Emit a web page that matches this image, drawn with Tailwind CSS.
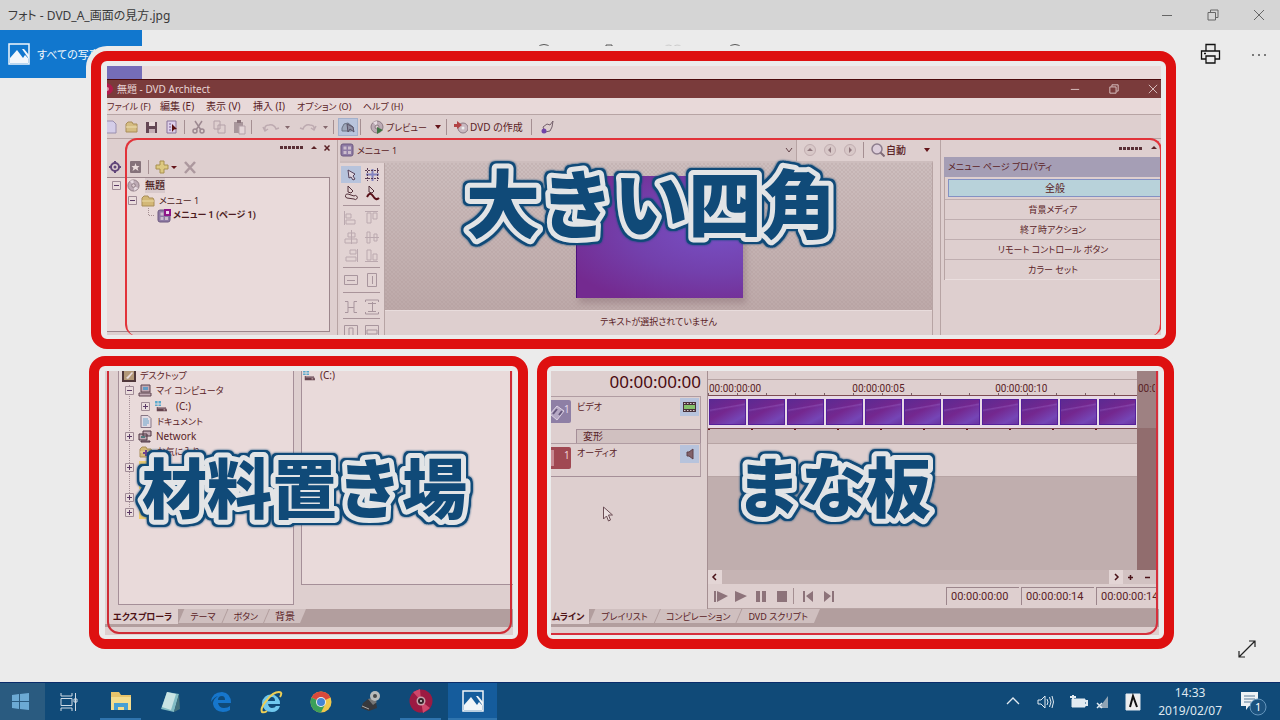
<!DOCTYPE html>
<html lang="ja">
<head>
<meta charset="utf-8">
<title>フォト - DVD_A_画面の見方.jpg</title>
<script src="https://cdn.jsdelivr.net/npm/@tailwindcss/browser@4"></script>
<style>
.caption{fill:#104a78;font-weight:900;stroke:#e2e4e6;stroke-width:10px;stroke-linejoin:round;paint-order:stroke fill;filter:drop-shadow(2px 0 0 #104a78) drop-shadow(-2px 0 0 #104a78) drop-shadow(0 2px 0 #104a78) drop-shadow(0 -2px 0 #104a78) drop-shadow(0 0 1px #104a78)}
.dither{background-image:repeating-conic-gradient(#a8909033 0 25%,transparent 0 50%),linear-gradient(#cdbebe,#bda9a9);background-size:4px 4px,100% 100%}
.film{background:linear-gradient(170deg,transparent 30%,#a070d055 34%,transparent 40%),linear-gradient(150deg,#5c2a92,#74278f 45%,#7546b6 80%,#6a35a2)}
.slide{background:radial-gradient(ellipse at 85% 45%,#7850c4,#7340ac 45%,#742a90 85%)}
</style>
</head>
<body class="h-screen min-h-[720px] flex flex-col bg-[#ebebeb] overflow-hidden text-[#5a2226] text-[9px] leading-[15px] font-['Noto_Sans','Noto_Sans_CJK_JP',sans-serif] [font-feature-settings:'palt']">
<svg class="hidden">
  <symbol id="plus" viewBox="0 0 9 9"><path d="M.5.5h8v8h-8z" fill="#eadcdc" stroke="#a08b96"/><path d="M2 4.500h5M4.500 2v5" stroke="#5c3b66"/></symbol>
  <symbol id="minus" viewBox="0 0 9 9"><path d="M.5.5h8v8h-8z" fill="#eadcdc" stroke="#a08b96"/><path d="M2 4.500h5" stroke="#5c3b66"/></symbol>
  <symbol id="folder" viewBox="0 0 14 13"><path d="M1 11V4l2-2h4l1 2h4l1 2v6H1z" fill="#d3b877" stroke="#a98d58"/><path d="M1 7h12" stroke="#ecdca8"/></symbol>
  <symbol id="disc" viewBox="0 0 14 14"><circle cx="7" cy="7" r="6" fill="#bcaab4" stroke="#8b7982"/><path d="M7 7L3 2l4-1zM7 7l5 3-4 3z" fill="#e6dae0"/><circle cx="7" cy="7" r="2" fill="#dccbd0" stroke="#8b7982"/></symbol>
  <symbol id="page" viewBox="0 0 14 14"><rect x="1" y="1" width="12" height="12" rx="2" fill="#8e7ba4" stroke="#6d5980"/><path d="M3.500 3.500h3v3h-3zM8 3.500h3v3H8zM3.500 8h3v3h-3zM8 8h3v3H8z" fill="#cbbccc"/></symbol>
  <symbol id="drive" viewBox="0 0 14 13"><path d="M0 0h3v3H0zM4 0h3v3H4zM0 4h3v2H0zM4 4h3v2H4z" fill="#58a8cc"/><path d="M2 7h10l2 3v2H2z" fill="#65434e"/><path d="M3 7h9l1 2H3z" fill="#a38b93"/><path d="M10 10h2v1h-2z" fill="#e5cccc"/></symbol>
  <symbol id="grip" viewBox="0 0 25 3"><path d="M1 1.500h24" stroke="#5a3036" stroke-width="3" stroke-dasharray="3 1"/></symbol>
  <symbol id="win" viewBox="0 0 12 12"><path d="M3.500 3V1h7.500v7.500H9M1 3.500h7.500V11H1z" fill="none" stroke="currentColor"/></symbol>
  <symbol id="x" viewBox="0 0 12 12"><path d="M1 1l10 10M11 1L1 11" stroke="currentColor"/></symbol>
  <symbol id="mag" viewBox="0 0 14 14"><circle cx="6" cy="6" r="5" fill="#dccdda" stroke="#8d7d8d" stroke-width="1.500"/><path d="M9.500 9.500l4 4" stroke="#806c78" stroke-width="2"/></symbol>
  <symbol id="picture" viewBox="0 0 22 22"><path d="M1 1h20v20H1z" fill="none" stroke="currentColor" stroke-width="1.500"/><path d="M2 20v-5l7-8 6 8 2-3 3 3v5z" fill="currentColor"/><path d="M14 6l7 10v-4l-5-6z" fill="currentColor"/></symbol>
</svg>

<header class="h-[30px] shrink-0 flex items-center justify-between bg-[#d5d5d5] pl-2 pr-[15px] text-[#3a3a3a]">
  <h1 class="text-[12px]">フォト - DVD_A_画面の見方.jpg</h1>
  <div class="flex items-center gap-[34px] text-[#666]">
    <button aria-label="最小化" class="w-3"><svg class="w-3 h-3" viewBox="0 0 12 12"><path d="M1 6.500h10" stroke="currentColor"/></svg></button>
    <button aria-label="元に戻す" class="w-3"><svg class="w-3 h-3"><use href="#win"/></svg></button>
    <button aria-label="閉じる" class="w-3"><svg class="w-3 h-3"><use href="#x"/></svg></button>
  </div>
</header>

<main class="relative grow">
  <div class="h-12 flex items-center pr-[13px]">
    <button class="h-12 w-[142px] shrink-0 bg-[#1177ce] text-[#f2f7fc] flex items-center gap-[7px] pl-2 text-[11px]"><svg class="w-[22px] h-[22px] shrink-0"><use href="#picture"/></svg>すべての写真</button>
    <div class="flex gap-[42px] ml-[392px] text-[#555]" aria-hidden="true">
      <svg class="w-[22px] h-[22px]" viewBox="0 0 22 22"><circle cx="10" cy="10" r="8.500" fill="none" stroke="currentColor"/></svg>
      <svg class="w-[22px] h-[22px]" viewBox="0 0 22 22"><path d="M3 4h16M8 4V2h6v2M5 4v16h12V4" fill="none" stroke="currentColor"/></svg>
      <svg class="w-[22px] h-[22px] text-[#ccc]" viewBox="0 0 22 22"><path d="M11 20L2 9Q1 2 7 2q3 0 4 3 1-3 4-3 6 0 5 7z" fill="none" stroke="currentColor"/></svg>
      <svg class="w-[22px] h-[22px]" viewBox="0 0 22 22"><circle cx="9" cy="10" r="8.500" fill="none" stroke="currentColor"/></svg>
    </div>
    <div class="flex items-center gap-[29px] ml-auto text-[#111]">
      <button aria-label="印刷"><svg class="w-[22px] h-[22px] block" viewBox="0 0 22 22" fill="none" stroke="currentColor" stroke-width="1.300"><path d="M6 8V1.500h9V8M6 16H1.500V8h18v8H15M6 13h9v7H6zM4 10.500h2"/></svg></button>
      <button aria-label="その他"><svg class="w-4 h-4 block" viewBox="0 0 16 16" fill="#555"><circle cx="2" cy="9" r="1"/><circle cx="8" cy="9" r="1"/><circle cx="14" cy="9" r="1"/></svg></button>
    </div>
  </div>

  <div class="relative -mt-[27px] ml-[91px] mr-[104px]">
    <!-- upper region: menu editor -->
    <section class="border-[10px] border-[#de1010] rounded-[16px] shadow-[0_0_0_5px_#ebebeb] bg-[#ebebeb] pt-[5px] pl-[6px] pr-[5px] pb-1">
      <div class="relative h-[269px] flex flex-col overflow-hidden bg-[#decfcf]">
        <div class="h-[13px] shrink-0 bg-[#e9dada]"><div class="w-[35px] h-full bg-[#756db8]"></div></div>
        <div class="h-[19px] shrink-0 bg-[#7a3b3b] border-t border-[#4c0a0c] text-[#e8d6d6] flex items-center justify-between pr-[3px] text-[10px]">
          <div class="flex items-center gap-1"><svg class="w-[6px] h-3" viewBox="0 0 6 12"><path d="M0 0q6 2 6 6t-6 6z" fill="#b01c4c"/><circle cx="0" cy="6" r="2" fill="#d9a"/></svg>無題 - DVD Architect</div>
          <div class="flex gap-[29px]">
            <button aria-label="最小化"><svg class="w-[10px] h-[10px] block" viewBox="0 0 12 12"><path d="M1 6.500h10" stroke="currentColor"/></svg></button>
            <button aria-label="元に戻す"><svg class="w-[10px] h-[10px] block"><use href="#win"/></svg></button>
            <button aria-label="閉じる"><svg class="w-[10px] h-[10px] block"><use href="#x"/></svg></button>
          </div>
        </div>
        <nav class="h-[17px] shrink-0 bg-[#e8d9d9] border-b border-[#b7a4a4] flex items-center text-[10px] text-left whitespace-nowrap">
          <button class="w-[53px] text-[9px] text-left">ファイル (F)</button><button class="w-[46px] text-left">編集 (E)</button><button class="w-[47px] text-left">表示 (V)</button><button class="w-11 text-left">挿入 (I)</button><button class="w-[66px] text-[9px] text-left">オプション (O)</button><button class="text-[9px]">ヘルプ (H)</button>
        </nav>
        <div class="h-[23px] shrink-0 flex items-center pt-px">
          <svg class="w-[231px] h-[18px] shrink-0" viewBox="0 0 231 18" fill="none">
            <path d="M-4 3H6l3 3v9H-4z" fill="#d4cde8" stroke="#9a8fae"/>
            <path d="M19 14V6l2-2h4l1 2h4v8z" fill="#d5bd82" stroke="#a98d58"/><path d="M19 9h11" stroke="#efe0b4"/>
            <path d="M39 4h11v11H39z" fill="#644754"/><path d="M42 4h6v4h-6z" fill="#e9dada"/><path d="M42 11h6v4h-6z" fill="#c5afb6"/>
            <path d="M60 3h9v12h-9z" fill="#ded0ea" stroke="#877299"/><path d="M62 6h2M62 9h2M62 12h2" stroke="#765c95"/><path d="M65 6l5 5-3 .500L65 14z" fill="#5a1010"/>
            <path d="M77.500 2v14M144.500 2v14M226.500 2v14" stroke="#a58f92"/>
            <g stroke="#9c8890" stroke-width="1.500"><path d="M88 3l6 9M95 3l-6 9"/><circle cx="88" cy="13" r="2"/><circle cx="95" cy="13" r="2"/></g>
            <path d="M107 3h6v8h-6zM111 7h7v8h-7z" fill="#decfcf" stroke="#b4a1a8"/><path d="M127 4h9v11h-9z" fill="#a8969b"/><path d="M130 2h4v3h-4z" fill="#8a747b"/><path d="M132 8h6v8h-6z" fill="#e4d6d8" stroke="#b4a1a8"/>
            <path d="M158 12q-1-5 4-5 5-1 7 4l3-1M156 9l2 4 3-2" stroke="#bdaab0" stroke-width="1.500"/><path d="M178 8h5l-2.500 3zM216 8h5l-2.500 3z" fill="#85686d"/>
            <path d="M207 12q1-5-4-5-5-1-7 4l-3-1M209 8l-2 4-3-2" stroke="#bdaab0" stroke-width="1.500"/>
          </svg>
          <button aria-label="自動プレビュー" class="w-5 h-[18px] bg-[#b9c4dc] border border-[#a3b1cc]"><svg viewBox="0 0 18 16"><path d="M3 9l2-4 4-1 5 4v3l-2 1-9 0z" fill="#9fa8bb" stroke="#6a7284"/><path d="M8 5l1 8 2-3 4 3-1-5z" fill="#8c8da1" stroke="#595166"/></svg></button>
          <span class="w-px h-4 bg-[#a58f92] ml-[2px]"></span>
          <button class="flex items-center gap-[2px] ml-[9px]"><svg class="w-[14px] h-[14px]" viewBox="0 0 14 14"><use href="#disc"/><path d="M7 7l6 3-6 4z" fill="#3e7443"/></svg>プレビュー</button>
          <svg class="w-2 h-2 ml-[7px]" viewBox="0 0 8 8"><path d="M1 2h6L4 6z" fill="#64141a"/></svg>
          <span class="w-px h-4 bg-[#a58f92] ml-1"></span>
          <button class="flex items-center gap-[2px] ml-[7px] text-[10px]"><svg class="w-[14px] h-[14px]" viewBox="0 0 14 14"><circle cx="9" cy="8" r="5" fill="#c9b8c0" stroke="#8f7b85"/><circle cx="9" cy="8" r="1.500" fill="#eee"/><path d="M0 4h3V1l5 4-5 4V7H0z" fill="#b24345"/></svg>DVD の作成</button>
          <span class="w-px h-4 bg-[#a58f92] ml-2"></span>
          <button aria-label="ヘルプ" class="ml-2"><svg class="w-[14px] h-[14px] block" viewBox="0 0 14 14"><path d="M5 12L3 7l4-3 3 1 3-4-1 6-2 4z" fill="#decfcf" stroke="#74606b"/><circle cx="4" cy="11" r="2.500" fill="#7144a8"/></svg></button>
        </div>

        <div class="grow flex min-h-0 border-t border-[#b7a4a4] gap-[7px]">
          <!-- project overview -->
          <aside class="w-[223px] shrink-0 flex flex-col pb-[3px]">
            <div class="h-[17px] flex items-center justify-end gap-[6px]">
              <svg class="w-[25px] h-[3px]"><use href="#grip"/></svg>
              <svg class="w-2 h-2" viewBox="0 0 8 8"><path d="M1 5h6L4 2z" fill="#5a2226"/></svg>
              <button aria-label="パネルを閉じる"><svg class="w-[6px] h-[6px] block" viewBox="0 0 12 12"><path d="M1 1l10 10M11 1L1 11" stroke="#5a2226" stroke-width="3"/></svg></button>
            </div>
            <div class="h-[21px] flex items-center">
              <svg class="w-[92px] h-[18px]" viewBox="0 0 92 18" fill="none"><circle cx="8" cy="9" r="4" stroke="#614579" stroke-width="2"/><circle cx="8" cy="9" r="1.500" fill="#614579"/><path d="M8 3v3M8 12v3M2 9h3M11 9h3" stroke="#614579" stroke-width="2"/><rect x="23" y="3" width="11" height="12" rx="1" fill="#85727a"/><path d="M28.500 5l1 3h3l-2 2 1 3-3-2-3 2 1-3-2-2h3z" fill="#eadcdc"/><path d="M41.500 2v14" stroke="#a58f92"/><path d="M53 3h4v4h4v4h-4v4h-4v-4h-4V7h4z" fill="#ddc981" stroke="#a8904f"/><path d="M64 8h6l-3 3z" fill="#64141a"/><path d="M78 4l10 11M88 4L78 15" stroke="#ac989e" stroke-width="2.500"/></svg>
            </div>
            <ul class="grow border-t border-r border-b border-[#9c868c] bg-[#e9dada] text-[#4c1d22]">
              <li class="flex items-center h-[15px] pl-[5px] gap-[6px] text-[10px]"><svg class="w-[9px] h-[9px]"><use href="#minus"/></svg><svg class="w-[13px] h-[13px]"><use href="#disc"/></svg><span class="bg-[#d8c9cb] font-medium -ml-px">無題</span></li>
              <li class="flex items-center h-[15px] pl-[21px] gap-1"><svg class="w-[9px] h-[9px]"><use href="#minus"/></svg><svg class="w-[14px] h-[13px]"><use href="#folder"/></svg>メニュー 1</li>
              <li class="flex items-center h-[15px] pl-[41px] gap-[2px] font-bold font-['Roboto','Noto_Sans_CJK_JP',sans-serif]"><svg class="w-[7px] h-[15px]" viewBox="0 0 7 15"><path d="M.5 0v7.500H7" fill="none" stroke="#a58f92" stroke-dasharray="1 1"/></svg><svg class="w-[14px] h-[14px]" viewBox="0 0 14 14"><use href="#page"/><path d="M8 1h5v5H8z" fill="#ead8ea" stroke="#8e1688" stroke-width="2"/></svg>メニュー 1 (ページ 1)</li>
            </ul>
          </aside>

          <!-- menu preview -->
          <section class="grow flex flex-col min-w-0 border-l border-[#b7a4a4] pl-[2px]">
            <div class="h-[22px] shrink-0 flex items-center gap-[7px]">
              <div class="relative grow h-full flex items-center bg-[#d4c4c4] border-r border-[#b7a4a4]">
                <svg class="absolute left-0 w-[14px] h-[14px] pointer-events-none"><use href="#page"/></svg>
                <select aria-label="メニュー" class="appearance-none w-full h-full pl-[17px] bg-transparent text-[9px]"><option>メニュー 1</option></select>
                <svg class="absolute right-[3px] w-2 h-2 pointer-events-none" viewBox="0 0 8 8"><path d="M1 2l3 4 3-4" fill="none" stroke="#64444a"/></svg>
              </div>
              <svg class="w-[52px] h-[14px]" viewBox="0 0 52 14"><g fill="#d8c8c8" stroke="#c1adb0"><circle cx="6" cy="7" r="5.500"/><circle cx="26" cy="7" r="5.500"/><circle cx="46" cy="7" r="5.500"/></g><path d="M3 8h6L6 5zM27 4v6l-3-3zM45 4v6l3-3z" fill="#8f777d"/></svg>
              <span class="w-px h-4 bg-[#a58f92]"></span>
              <label class="relative flex items-center"><svg class="absolute left-0 w-[14px] h-[14px]"><use href="#mag"/></svg><select aria-label="ズーム" class="appearance-none bg-transparent w-[62px] pl-[15px] text-[10px] h-5 font-medium"><option>自動</option></select><svg class="absolute right-[2px] w-2 h-2 pointer-events-none" viewBox="0 0 8 8"><path d="M1 2h6L4 6z" fill="#64141a"/></svg></label>
            </div>
            <div class="grow flex min-h-0 border-t-2 border-t-[#cdbdbd] border-r border-r-[#b7a4a4]">
              <svg class="w-[44px] h-[174px] shrink-0 bg-[#e2d3d3]" viewBox="0 0 44 174" fill="none" stroke="#bba9af">
                <path d="M1 3h20v17H1z" fill="#b7c3dc" stroke="none"/><path d="M8 7l7 4-2 2 2 3-2 1-2-3-2 1z" fill="#dfd5df" stroke="#53405a"/>
                <path d="M32.500 6v12M26 11.500h13" stroke="#8284c0" stroke-width="2"/><path d="M27.500 5v13M37.500 5v13M25 7.500h15M25 15.500h15" stroke="#5a3c54" stroke-dasharray="2 1"/>
                <g stroke="#53303a"><path d="M8 23l5 5-2 2-3-1zM29 23l5 5-2 2-3-1z" fill="#e2d3d3"/><path d="M7 35a2 2 0 1 1 1-4l6 2a2 2 0 1 1 0 3z"/><path d="M27 34q3-6 6-1t6 2" stroke="#591018" stroke-width="2"/></g>
                <path d="M3 42.500h37M3 104.500h37M3 129.500h37M3 155.500h37" stroke="#a9949a"/>
                <path d="M4.500 48v14M6 51h5v4H6zM6 57h9v4H6zM25 48.500h13M27 50h4v10h-4zM33 50h4v6h-4z"/>
                <path d="M11.500 67v14M8 70h7v4H8zM5 76h12v4H5zM25 74.500h14M27 69h3v11h-3zM34 71h3v7h-3z"/>
                <path d="M17.500 86v13M10 87h6v4h-6zM6 94h10v4H6zM25 98.500h13M27 87h4v10h-4zM33 91h4v6h-4z"/>
                <g stroke="#a8959d"><path d="M4.500 112.500h13v9h-13zM7 117.500h8M27.500 110.500h9v13h-9zM32.500 113v8"/><path d="M5 138.500h3v11H5M17 138.500h-3v11h3M8 144.500h6M25.500 139v-2h13v2M25.500 149v2h13v-2M32.500 139v10M28 140.500h8M28 148.500h8"/><path d="M4.500 162.500h13v14h-13zM9 165h4v9H9zM25.500 162.500h13v14h-13zM27 167h10v4H27z"/></g>
              </svg>
              <div class="grow flex flex-col border-l border-[#b7a4a4]">
                <div class="dither grow flex justify-center pt-[13px]"><div class="slide w-[167px] h-[122px] shadow-[3px_5px_6px_#8c707577] border-l border-[#4b117c] ml-[2px]"></div></div>
                <p class="h-[25px] shrink-0 text-center leading-[21px] border-t border-[#e8dcdc]">テキストが選択されていません</p>
              </div>
            </div>
          </section>

          <!-- page properties -->
          <aside class="w-[221px] shrink-0 border-l border-[#b7a4a4] pl-[3px]">
            <div class="h-[18px] flex items-center justify-end gap-[7px] pr-[3px]"><svg class="w-[25px] h-[3px]"><use href="#grip"/></svg><svg class="w-2 h-2" viewBox="0 0 8 8"><path d="M1 5h6L4 2z" fill="#5a2226"/></svg></div>
            <h2 class="h-5 bg-[#a59eb5] pl-1 leading-[19px]">メニュー ページ プロパティ</h2>
            <div class="flex flex-col border-l border-[#b7a4a4]">
              <button class="h-[18px] ml-[3px] mt-[2px] mb-[2px] bg-[#b8d2da] border border-r-0 border-[#8491c4] text-[10px] leading-[16px]">全般</button>
              <button class="h-[20px] border-t border-[#bfaeb0]">背景メディア</button>
              <button class="h-[20px] border-t border-[#bfaeb0]">終了時アクション</button>
              <button class="h-[20px] border-t border-[#bfaeb0]">リモート コントロール ボタン</button>
              <button class="h-[21px] border-y border-t-[#bfaeb0] border-b-[#eadede]">カラー セット</button>
            </div>
          </aside>
        </div>
        <div class="absolute left-[18px] -right-px top-[72px] -bottom-px border-2 border-[#e2333a] rounded-[12px] border-b-0 pointer-events-none"></div>
        <svg class="absolute inset-0 w-full h-full overflow-visible pointer-events-none"><text x="359" y="166" class="caption text-[74px] font-['Noto_Sans_CJK_JP',sans-serif] [font-feature-settings:normal]">大きい四角</text></svg>
      </div>
    </section>

    <div class="mt-[7px] -ml-[2px] mr-[2px] grid grid-cols-[439fr_637fr] gap-[9px]">
      <!-- lower left region: explorer -->
      <section class="min-w-0 border-[10px] border-[#de1010] rounded-[16px] shadow-[0_0_0_4px_#ebebeb] bg-[#ebebeb] pt-[5px] pl-[6px] pr-[5px] pb-1">
        <div class="relative h-[264px] flex flex-col overflow-hidden bg-[#decfcf]">
          <div class="h-[234px] shrink-0 flex gap-[7px] pl-[13px]">
            <div class="relative w-[176px] shrink-0 border border-t-0 border-[#a58f98] bg-[#e9dada]">
              <span class="absolute left-[10px] top-[14px] h-[128px] border-l border-dotted border-[#a58f98]"></span>
              <ul class="relative -mt-[3px]">
                <li class="h-[15px] flex items-center gap-1 pl-[3px]"><svg class="w-[14px] h-[13px]" viewBox="0 0 14 13"><path d="M1 1h12v11H1z" fill="#b39878" stroke="#50383a" stroke-width="2"/><path d="M4 9l6-6 1 1-5 6z" fill="#eadcdc"/></svg>デスクトップ</li>
                <li class="h-[15px] flex items-center gap-1 pl-[6px]"><svg class="w-[9px] h-[9px]"><use href="#minus"/></svg><svg class="w-[14px] h-[13px]" viewBox="0 0 14 13"><path d="M3 1h9v7H3zM1 9h12v3H1z" fill="#c1aab4" stroke="#5f4450"/><path d="M5 3h5v3H5z" fill="#639bc4"/></svg>マイ コンピュータ</li>
                <li class="h-[16px] flex items-center gap-1 pl-[22px]"><svg class="w-[9px] h-[9px]"><use href="#plus"/></svg><svg class="w-[14px] h-[11px]"><use href="#drive"/></svg><span class="pl-1 text-[10px]">(C:)</span></li>
                <li class="h-[15px] flex items-center gap-1 pl-5"><svg class="w-[14px] h-[13px]" viewBox="0 0 14 13"><path d="M2 .500h7l3 3v9H2z" fill="#e4dbe3" stroke="#877584"/><path d="M4 4h5M4 6h6M4 8h6M4 10h4" stroke="#6aa4ca"/></svg>ドキュメント</li>
                <li class="h-[15px] flex items-center gap-1 pl-[6px]"><svg class="w-[9px] h-[9px]"><use href="#plus"/></svg><svg class="w-[14px] h-[13px]" viewBox="0 0 14 13"><path d="M5 1h8v5H5zM1 4h8v6H1zM3 11h9v1H3z" fill="#c1aab4" stroke="#4d3440"/><path d="M3 6h4v2H3z" fill="#547b7e"/></svg><span class="text-[10px]">Network</span></li>
                <li class="h-[15px] flex items-center gap-1 pl-5"><svg class="w-[14px] h-[13px]" viewBox="0 0 14 13"><use href="#folder"/><path d="M7 5v6M4 8h6" stroke="#71428c" stroke-width="2"/></svg>お気に入り</li>
                <li class="h-[16px] flex items-center gap-[5px] pl-[6px]"><svg class="w-[9px] h-[9px]"><use href="#plus"/></svg><span class="w-3 h-3 bg-[#f0cd70]"></span></li>
                <li class="h-[15px] flex items-center pl-5"><span class="w-3 h-3 bg-[#f0cd70]"></span></li>
                <li class="h-[15px] flex items-center gap-[5px] pl-[6px]"><svg class="w-[9px] h-[9px]"><use href="#plus"/></svg></li>
                <li class="h-[15px] flex items-center gap-[5px] pl-[6px]"><svg class="w-[9px] h-[9px]"><use href="#plus"/></svg><span class="w-3 h-3 bg-[#f0cd70]"></span></li>
              </ul>
            </div>
            <div class="grow h-[214px] border-l border-b border-[#a58f98] bg-[#e9dada]">
              <div class="flex items-center gap-1 -mt-[3px] text-[10px]"><svg class="w-[14px] h-[11px]"><use href="#drive"/></svg>(C:)</div>
            </div>
          </div>
          <nav class="mt-1 h-[18px] shrink-0 flex items-start bg-[#b29e9e] leading-[15px]">
            <button class="h-[15px] pl-2 pr-[6px] bg-[#decfcf] font-bold text-[#4c1216]">エクスプローラ</button>
            <button class="h-[14px] px-3 bg-[#cfbfbf] [clip-path:polygon(6px_0,100%_0,calc(100%_-_6px)_100%,0_100%)]">テーマ</button>
            <button class="h-[14px] px-[11px] bg-[#cfbfbf] -ml-[5px] [clip-path:polygon(6px_0,100%_0,calc(100%_-_6px)_100%,0_100%)]">ボタン</button>
            <button class="h-[14px] px-[11px] bg-[#cfbfbf] -ml-[5px] text-[10px] [clip-path:polygon(6px_0,100%_0,calc(100%_-_6px)_100%,0_100%)]">背景</button>
          </nav>
          <div class="absolute left-[2px] right-px -top-3 bottom-[1px] border-2 border-[#cf2b35] rounded-[12px] pointer-events-none"></div>
          <svg class="absolute inset-0 w-full h-full overflow-visible pointer-events-none"><text x="37" y="142" class="caption text-[65px] font-['Noto_Sans_CJK_JP',sans-serif] [font-feature-settings:normal]">材料置き場</text></svg>
        </div>
      </section>

      <!-- lower right region: timeline -->
      <section class="min-w-0 border-[10px] border-[#de1010] rounded-[16px] shadow-[0_0_0_4px_#ebebeb] bg-[#ebebeb] pt-[5px] pl-1 pr-[5px] pb-1">
        <div class="relative h-[264px] flex flex-col overflow-hidden bg-[#decfcf]">
          <div class="h-[238px] shrink-0 flex pr-[2px]">
            <div class="w-[157px] shrink-0 flex flex-col border-r border-[#a58f92] pr-[6px]">
              <output class="h-[25px] text-right text-[17px] leading-[21px] text-[#4a0a10] font-['Noto_Sans',sans-serif]">00:00:00:00</output>
              <div class="h-[33px] border-t border-r border-[#b09ca2] flex justify-between">
                <svg class="w-5 h-[23px] mt-[3px]" viewBox="0 0 20 23"><path d="M0 0h18q2 0 2 2v19q0 2-2 2H0z" fill="#8e7fa5"/><path d="M-1 14L6 6l7 5-7 9z" fill="#b5a8c4" stroke="#ddd2e4"/><path d="M2 14l4-5M8 15l3-4" stroke="#65577c" stroke-width="2"/><text x="13" y="13" font-size="10" fill="#e5daea">1</text></svg>
                <span class="grow pl-[6px] pt-[2px]">ビデオ</span>
                <button aria-label="ビデオ トラック" class="w-[19px] h-[18px] mt-px mr-px bg-[#b7c3dc]"><svg viewBox="0 0 19 18"><path d="M3 4h13v10H3z" fill="#49323b"/><path d="M4 7h11v4H4z" fill="#85c26a"/><path d="M4 5.500h12M4 12.500h12" stroke="#d9c8cc" stroke-dasharray="1.500 1.500"/></svg></button>
              </div>
              <div class="h-[14px] ml-[25px] pl-[6px] border border-b-0 border-[#a58f98] bg-[#d0c0c0] text-[10px] leading-[13px]">変形</div>
              <div class="h-[34px] border border-l-0 border-[#b09ca2] border-b-[#a58f98] flex justify-between">
                <svg class="w-5 h-[22px] mt-[3px]" viewBox="0 0 20 22"><path d="M0 0h18q2 0 2 2v18q0 2-2 2H0z" fill="#a04852"/><path d="M0 3h3v16H0" fill="#c78a92"/><text x="13" y="12" font-size="10" fill="#efd5d8">1</text></svg>
                <span class="grow pl-[6px] pt-px">オーディオ</span>
                <button aria-label="オーディオ トラック" class="w-[19px] h-[18px] mt-px mr-px bg-[#b7c3dc]"><svg viewBox="0 0 19 18"><path d="M7 7h2l4-3v10l-4-3H7z" fill="#82626a" stroke="#5f4149"/></svg></button>
              </div>
              <svg class="ml-[51px] mt-[29px] w-3 h-4" viewBox="0 0 12 16"><path d="M1.500 1v12l3-3 2 5 2-1-2-5h4z" fill="#eadfe0" stroke="#6b4d54"/></svg>
            </div>
            <div class="grow min-w-0 flex flex-col">
              <div class="relative h-[199px] flex flex-col pr-[20px] bg-[#9e8182]">
                <div class="h-[9px] bg-[#decfcf] border-b border-[#b7a4a4]"></div>
                <div class="relative h-[16px] bg-[#decfcf] bg-[repeating-linear-gradient(90deg,#7b5f65_0_1px,transparent_1px_29px)] bg-[length:100%_2px] bg-bottom bg-no-repeat border-b border-[#7c4c53] font-['Roboto',sans-serif] text-[10px] leading-[17px]">
                  <span class="absolute left-px">00:00:00:00</span><span class="absolute left-[33.4%] pl-px">00:00:00:05</span><span class="absolute left-[66.7%] pl-px">00:00:00:10</span><span class="absolute left-full pl-px w-[18px] overflow-hidden">00:00:00:15</span>
                </div>
                <div class="h-[33px] shrink-0 flex gap-[2px] py-[3px] px-px bg-[#e8dae6] border-b border-[#7c4c53]">
                  <div class="film grow border border-[#55209a]"></div><div class="film grow border border-[#55209a]"></div><div class="film grow border border-[#55209a]"></div><div class="film grow border border-[#55209a]"></div><div class="film grow border border-[#55209a]"></div><div class="film grow border border-[#55209a]"></div><div class="film grow border border-[#55209a]"></div><div class="film grow border border-[#55209a]"></div><div class="film grow border border-[#55209a]"></div><div class="film grow border border-[#55209a]"></div><div class="film grow border border-[#55209a]"></div>
                </div>
                <div class="h-[15px] shrink-0 bg-[#cdbcbc] border-b border-[#b7a4a4] bg-[repeating-linear-gradient(90deg,#6a1018_0_2px,transparent_2px_43px)] bg-[length:100%_1px] bg-no-repeat"></div>
                <div class="h-[33px] bg-[#decfcf] border-b border-[#b7a4a4]"></div>
                <div class="grow bg-[#c0aeae]"></div>
                <div class="absolute right-0 bottom-0 top-[57px] w-5 bg-[#916d6e]"></div>
              </div>
              <div class="h-[14px] flex items-center text-[#4a1218] bg-[#d2c2c2]">
                <button aria-label="左へ" class="w-[14px] h-full bg-[#e3d5d5] flex items-center justify-center"><svg class="w-2 h-2" viewBox="0 0 8 8"><path d="M5 1L2 4l3 3" fill="none" stroke="currentColor" stroke-width="1.500"/></svg></button>
                <div class="grow h-full bg-[#c6b4b4]"></div>
                <button aria-label="右へ" class="w-[14px] h-full bg-[#e3d5d5] flex items-center justify-center"><svg class="w-2 h-2" viewBox="0 0 8 8"><path d="M3 1l3 3-3 3" fill="none" stroke="currentColor" stroke-width="1.500"/></svg></button>
                <button aria-label="拡大" class="w-[14px] flex justify-center"><svg class="w-[7px] h-[7px]" viewBox="0 0 7 7"><path d="M1 3.500h5M3.500 1v5" stroke="currentColor" stroke-width="1.500"/></svg></button>
                <button aria-label="縮小" class="w-[20px] flex justify-center"><svg class="w-[7px] h-[7px]" viewBox="0 0 7 7"><path d="M1 3.500h5" stroke="currentColor" stroke-width="1.500"/></svg></button>
              </div>
              <div class="h-[25px] flex items-center justify-between bg-[#decfcf] border-b border-[#b7a4a4] overflow-hidden">
                <svg class="w-[130px] h-4 shrink-0" viewBox="0 0 130 16" fill="#8d737a"><path d="M6 3h2v11H6zM9 3l11 5-11 6zM27 3l12 5-12 6zM48 3h4v11h-4zM54 3h4v11h-4zM69 3h10v11H69zM95 3h2v11h-2zM105 3l-7 5 7 6zM124 3h2v11h-2zM116 3l7 5-7 6z"/><path d="M85.500 0v16" stroke="#a58f92"/></svg>
                <div class="flex gap-[2px] -mr-[12px] font-['Roboto',sans-serif] text-[11px] leading-[18px]">
                  <output class="w-[73px] h-[18px] pl-1 border-l border-t border-[#9c868c]">00:00:00:00</output><output class="w-[73px] h-[18px] pl-1 border-l border-t border-[#9c868c]">00:00:00:14</output><output class="w-[73px] h-[18px] pl-1 border-l border-t border-[#9c868c]">00:00:00:14</output>
                </div>
              </div>
            </div>
          </div>
          <nav class="h-[18px] shrink-0 flex items-start bg-[#b29e9e] leading-[15px]">
            <button class="h-[15px] pl-px pr-[5px] bg-[#decfcf] font-bold text-[#4c1216]">ムライン</button>
            <button class="h-[14px] px-3 bg-[#cfbfbf] [clip-path:polygon(6px_0,100%_0,calc(100%_-_6px)_100%,0_100%)]">プレイリスト</button>
            <button class="h-[14px] px-[11px] bg-[#cfbfbf] -ml-[5px] [clip-path:polygon(6px_0,100%_0,calc(100%_-_6px)_100%,0_100%)]">コンピレーション</button>
            <button class="h-[14px] px-3 bg-[#cfbfbf] -ml-[5px] [clip-path:polygon(6px_0,100%_0,calc(100%_-_6px)_100%,0_100%)]">DVD スクリプト</button>
          </nav>
          <div class="absolute -left-4 right-px -top-3 bottom-0 border-2 border-[#d62f3c] rounded-[12px] pointer-events-none"></div>
          <svg class="absolute inset-0 w-full h-full overflow-visible pointer-events-none"><text x="185" y="141" class="caption text-[65px] font-['Noto_Sans_CJK_JP',sans-serif] [font-feature-settings:normal]">まな板</text></svg>
        </div>
      </section>
    </div>
  </div>
  <button aria-label="全画面表示" class="absolute right-[23px] bottom-[23px]"><svg class="w-5 h-5 block" viewBox="0 0 20 20" fill="none" stroke="#222" stroke-width="1.200"><path d="M2 18L18 2M12 2h6v6M2 12v6h6"/></svg></button>
</main>

<footer class="h-[38px] shrink-0 flex items-stretch bg-[#104a78] border-t border-[#0a2c6a] text-[#dfe8f0]">
  <button aria-label="スタート" class="w-[45px] bg-[#2a5b80] flex items-center pl-3"><svg class="w-[17px] h-[17px]" viewBox="0 0 17 17" fill="#6caad4"><path d="M0 2l7-1v7H0zM8 1l9-1v8H8zM0 9h7v7l-7-1zM8 9h9v8l-9-1z"/></svg></button>
  <button aria-label="タスク ビュー" class="w-12 flex items-center justify-center"><svg class="w-[18px] h-[18px]" viewBox="0 0 18 18" fill="none" stroke="#cfdbe6"><path d="M1 0v3h11V0M1 5.500h11v7H1zM1 18v-3h11v3M15.500 0v18M14 6h3v3h-3z"/></svg></button>
  <button aria-label="エクスプローラー" class="w-[41px] ml-[7px] border-b-2 border-[#2f74ae] flex items-center justify-center"><svg class="w-[22px] h-5" viewBox="0 0 22 20"><path d="M1 18V1h8l2 3h10v14z" fill="#e8c46b"/><path d="M1 6h20v13H1z" fill="#f5dd8e"/><path d="M4 19v-7h14v7h-4v-3H8v3z" fill="#479fd4"/></svg></button>
  <button aria-label="メモ帳" class="w-[50px] ml-1 flex items-center justify-center"><svg class="w-[22px] h-[22px]" viewBox="0 0 22 22"><path d="M8 1l12 2-5 18-13-3z" fill="#82bcc4"/><path d="M8 1l9 2-5 16-9-3z" fill="#c9e4e4"/><path d="M20 3l1 15-6 3z" fill="#42717c"/></svg></button>
  <button aria-label="Edge" class="w-[50px] ml-px flex items-center justify-center"><svg class="w-[22px] h-[22px]" viewBox="0 0 22 22"><path d="M1 11Q2 1 12 1q9 1 9 11H8q1 5 6 5 4 0 6-2v4q-3 2-7 2-9-1-10-8 0-5 5-8-4 1-7 6zm7-2h7q0-4-3-4-4 0-4 4z" fill="#1676cc"/></svg></button>
  <button aria-label="Internet Explorer" class="w-[50px] flex items-center justify-center"><svg class="w-6 h-6" viewBox="0 0 24 24"><path d="M3 13a9 9 0 1 1 18 1H9q1 4 4 4 3 0 4-2h4q-2 6-8 6-9 0-10-9zm6-2h7q0-4-3-4-4 0-4 4z" fill="#70c8ee"/><path d="M21 7q3-5-1-5-6 0-12 8-7 8-5 12 2 1 5-1" fill="none" stroke="#edce55" stroke-width="2"/></svg></button>
  <button aria-label="Chrome" class="w-[50px] flex items-center justify-center"><svg class="w-[22px] h-[22px]" viewBox="0 0 22 22"><circle cx="11" cy="11" r="10.500" fill="#f1c84b"/><path d="M11 11L1.500 6.500A10.500 10.500 0 0 1 20.500 6.500z" fill="#d9493c"/><path d="M11 11L1.500 6.500A10.500 10.500 0 0 0 11 21.500l4-8z" fill="#3ba05a"/><circle cx="11" cy="11" r="5" fill="#eee"/><circle cx="11" cy="11" r="4" fill="#4685d4"/></svg></button>
  <button aria-label="カメラ" class="w-[50px] flex items-center justify-center"><svg class="w-[22px] h-[22px]" viewBox="0 0 22 22"><path d="M3 12l5-4 8 3 1 6-8 3-8-3z" fill="#37383c"/><path d="M8 8l4-1 5 4-4 3z" fill="#777"/><circle cx="15" cy="5" r="5" fill="#b9bbbb"/><circle cx="15" cy="5" r="2" fill="#47484a"/><path d="M2 15l7 3" stroke="#aaa"/></svg></button>
  <button aria-label="DVD Architect" class="w-[41px] ml-1 border-b-2 border-[#2f74ae] flex items-center justify-center"><svg class="w-6 h-6" viewBox="0 0 24 24"><circle cx="12" cy="12" r="11.500" fill="#9c1a42"/><path d="M12 12L4 3l7-3zM12 12l9 7-7 5z" fill="#cf476b"/><circle cx="12" cy="12" r="4.500" fill="#c7a1aa"/><circle cx="12" cy="12" r="3" fill="#362229"/><circle cx="12" cy="12" r="1" fill="#ddd"/></svg></button>
  <button aria-label="フォト" class="w-[49px] ml-[7px] bg-[#155c9c] border-b-2 border-[#2f74ae] flex items-center justify-center text-[#f2f5f8]"><svg class="w-[22px] h-[22px]"><use href="#picture"/></svg></button>
  <div class="grow flex items-center justify-end pr-[13px]">
    <svg class="w-[136px] h-5 mr-[17px]" viewBox="0 0 136 20" fill="none" stroke="#e2eaf1"><path d="M2 12l6-6 6 6" stroke-width="1.300"/><path d="M33 8h3l4-4v12l-4-4h-3zM42 7q2 3 0 6M44.500 5q3 5 0 10M47 4q3 6 0 12"/><path d="M67 7h13v8H67z" fill="#e2eaf1"/><path d="M80 9h2v4h-2M68 7V3M65 5h6" stroke-width="2"/><path d="M94 16l9-12v12z" fill="#91a4b4" stroke="none"/><path d="M92 11l5 5M97 11l-5 5" stroke-width="1.500"/><path d="M121 2h14v16h-14z" fill="#eee"/><path d="M125 15l3-11 4 11" stroke="#111" stroke-width="2"/></svg>
    <time class="text-center text-[12px] leading-[18px] font-['Noto_Sans',sans-serif]">14:33<br>2019/02/07</time>
    <button aria-label="通知" class="ml-[17px]"><svg class="w-7 h-7 block" viewBox="0 0 28 28"><path d="M2 4h17v14h-9l-3 4v-4H2z" fill="#eef2f5"/><path d="M5 8h11M5 11h11M5 14h7" stroke="#587b98"/><circle cx="19" cy="19" r="8" fill="#1b527f" stroke="#6596bd"/><text x="16" y="23" font-size="11" fill="#fff">1</text></svg></button>
  </div>
</footer>
</body>
</html>
